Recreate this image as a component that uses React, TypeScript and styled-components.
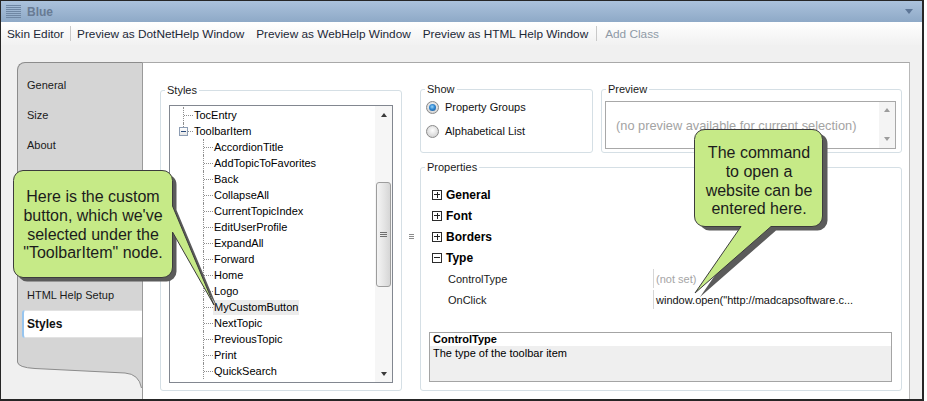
import React from "react";
import styled, { createGlobalStyle, css } from "styled-components";

const UI_FONT = `"Liberation Sans", Arial, sans-serif`;

const GlobalStyle = createGlobalStyle`
  html, body { margin: 0; padding: 0; background: #ffffff; }
  body { font-family: ${UI_FONT}; color: #111; }
  *, *::before, *::after { box-sizing: border-box; }
`;

const Frame = styled.div`
  position: relative;
  width: 924px;
  height: 401px;
  border-style: solid;
  border-color: #262626;
  border-width: 1px 2px 2px 1px;
  background: #f0f0f0;
  display: flex;
  flex-direction: column;
  overflow: hidden;
`;

/* ---------- title bar ---------- */
const TitleBar = styled.div`
  flex: none;
  height: 21px;
  display: flex;
  align-items: center;
  gap: 6px;
  padding: 0 9px 0 5px;
  background: linear-gradient(#abc2dc, #8ea9c7);
  color: #687b94;
  font-size: 12px;
  font-weight: bold;
`;
const TitleText = styled.span`
  flex: 1;
`;

/* ---------- toolbar ---------- */
const Toolbar = styled.div`
  flex: none;
  height: 23px;
  display: flex;
  align-items: center;
  background: linear-gradient(#ffffff, #f1f1f1);
  font-size: 11.8px;
`;
const ToolButton = styled.span<{ $disabled?: boolean }>`
  padding: 0 6px;
  white-space: nowrap;
  color: ${(p) => (p.$disabled ? "#8f9aa6" : "#1b2736")};
`;
const ToolSep = styled.span<{ $gap?: number }>`
  width: 1px;
  height: 15px;
  margin: 0 ${(p) => p.$gap ?? 0}px;
  background: #c9c9c9;
`;

/* ---------- body ---------- */
const Body = styled.div`
  flex: 1;
  min-height: 0;
  display: flex;
  padding: 17px 12px 0 16px;
`;
const MainPanel = styled.div`
  flex: 1;
  display: flex;
`;
const TabColumn = styled.div`
  width: 125px;
  flex: none;
  display: flex;
  flex-direction: column;
  margin-bottom: 11px;
`;
const TabList = styled.div`
  flex: 1;
  background: #d5d5d5;
  border-top: 1px solid #8c8c8c;
  border-left: 1px solid #8c8c8c;
  border-top-left-radius: 8px;
  padding-top: 7px;
  display: flex;
  flex-direction: column;
`;
const Tab = styled.div<{ $active?: boolean }>`
  height: 30px;
  margin-left: 4px;
  padding-left: 5px;
  display: flex;
  align-items: center;
  font-size: 11px;
  color: #1a1a1a;
  ${(p) =>
    p.$active &&
    css`
      height: 28px;
      background: #ffffff;
      border-left: 2px solid #97c5ef;
      padding-left: 3px;
      border-radius: 3px 0 0 3px;
      font-weight: bold;
      font-size: 12px;
      color: #111;
      box-shadow: inset 0 1px 0 #e2e2e2, inset 0 -1px 0 #e2e2e2;
    `}
`;
const TabFoot = styled.svg`
  display: block;
  flex: none;
`;

const ContentArea = styled.div`
  flex: 1;
  background: #ffffff;
  border-left: 1px solid #9a9a9a;
  border-top: 1px solid #a9a9a9;
  border-right: 1px solid #b9b9b9;
  padding: 19px 7px 8px 17px;
  display: grid;
  grid-template-columns: 242px 18px 482px;
`;

/* ---------- group boxes ---------- */
type Pad = [number, number, number, number];
const GroupBox = styled.fieldset<{ $pad: Pad }>`
  margin: 0;
  min-width: 0;
  border: 1px solid #d5dfe5;
  border-radius: 3px;
  padding: ${(p) => p.$pad.map((v) => v + "px").join(" ")};
  display: flex;
  flex-direction: column;
  & > legend {
    margin-left: ${(p) => 4 - p.$pad[3]}px;
  }
`;
const Legend = styled.legend`
  padding: 0 2px;
  font-size: 11px;
  line-height: 16px;
  color: #1a1a1a;
`;

/* ---------- styles tree ---------- */
const ListBox = styled.div`
  height: 278px;
  display: flex;
  border: 1px solid #828790;
  background: #ffffff;
`;
const TreeArea = styled.div`
  flex: 1;
  padding-top: 1px;
  overflow: hidden;
  font-size: 11px;
  color: #000;
`;
const TreeRow = styled.div<{ $level: number }>`
  height: 16px;
  display: flex;
  align-items: center;
  padding-left: ${(p) => 13 + 20 * p.$level}px;
`;
const Connector = styled.span<{ $last?: boolean }>`
  position: relative;
  flex: none;
  width: 10px;
  height: 16px;
  &::before {
    content: "";
    position: absolute;
    left: 0;
    top: 0;
    height: ${(p) => (p.$last ? "8px" : "16px")};
    border-left: 1px dotted #8f8f8f;
  }
  &::after {
    content: "";
    position: absolute;
    left: 1px;
    top: 8px;
    width: 9px;
    border-top: 1px dotted #8f8f8f;
  }
`;
const TreeToggle = styled.span`
  position: absolute;
  left: -4px;
  top: 4px;
  width: 9px;
  height: 9px;
  border: 1px solid #8d9db3;
  background: linear-gradient(#ffffff, #e4e4e4);
  z-index: 1;
  &::after {
    content: "";
    position: absolute;
    left: 1px;
    right: 1px;
    top: 3px;
    height: 1px;
    background: #2a4b7c;
  }
`;
const TreeLabel = styled.span<{ $selected?: boolean }>`
  padding: 0 1px;
  line-height: 15px;
  white-space: nowrap;
  background: ${(p) => (p.$selected ? "#ececec" : "transparent")};
`;

const VScroll = styled.div`
  width: 17px;
  flex: none;
  display: flex;
  flex-direction: column;
  background: #f6f6f6;
`;
const ScrollBtn = styled.div`
  height: 17px;
  flex: none;
  display: flex;
  align-items: center;
  justify-content: center;
`;
const Arrow = styled.span<{ $dir: "up" | "down"; $color?: string }>`
  width: 0;
  height: 0;
  border-left: 3.5px solid transparent;
  border-right: 3.5px solid transparent;
  ${(p) =>
    p.$dir === "up"
      ? css`border-bottom: 4px solid ${p.$color || "#3a3a3a"};`
      : css`border-top: 4px solid ${p.$color || "#3a3a3a"};`}
`;
const ScrollTrack = styled.div`
  flex: 1;
  padding-top: 59px;
`;
const Thumb = styled.div`
  height: 105px;
  margin: 0 1px;
  border: 1px solid #9d9d9d;
  border-radius: 3px;
  background: linear-gradient(90deg, #f4f4f4, #e6e6e6 50%, #d6d6d6);
  display: flex;
  align-items: center;
  justify-content: center;
`;
const ThumbGrip = styled.span`
  width: 7px;
  height: 6px;
  background: repeating-linear-gradient(#6f6f6f 0 1px, transparent 1px 2px);
`;

const Splitter = styled.div`
  display: flex;
  align-items: center;
  justify-content: center;
`;
const SplitGrip = styled.span`
  width: 5px;
  height: 5px;
  background: repeating-linear-gradient(#8c8c8c 0 1px, transparent 1px 2px);
`;

/* ---------- right column ---------- */
const RightColumn = styled.div`
  display: flex;
  flex-direction: column;
  gap: 6px;
`;
const TopRow = styled.div`
  display: flex;
  gap: 8px;
  height: 72px;
  flex: none;
  margin-top: -1px;
`;
const ShowBox = styled(GroupBox)`
  width: 173px;
  flex: none;
  gap: 4px;
`;
const PreviewBox = styled(GroupBox)`
  flex: 1;
`;
const RadioRow = styled.div`
  height: 20px;
  display: flex;
  align-items: center;
  gap: 6px;
  font-size: 11px;
  color: #111;
`;
const Radio = styled.span<{ $checked?: boolean }>`
  position: relative;
  width: 13px;
  height: 13px;
  flex: none;
  border-radius: 50%;
  border: 1px solid #8a8a8a;
  background: radial-gradient(circle at 50% 40%, #fdfdfd, #d0d0d0 85%);
  ${(p) =>
    p.$checked &&
    css`
      &::after {
        content: "";
        position: absolute;
        left: 2px;
        top: 2px;
        width: 7px;
        height: 7px;
        border-radius: 50%;
        background: radial-gradient(circle at 45% 40%, #9ad6fa 0, #2f86d0 45%, #1b4f8c 100%);
      }
    `}
`;
const PreviewField = styled.div`
  flex: 1;
  display: flex;
  border: 1px solid #a8a8a8;
  background: #ffffff;
`;
const PreviewText = styled.div`
  flex: 1;
  padding: 0 10px;
  display: flex;
  align-items: center;
  color: #a3a3a3;
  font-size: 12.8px;
  white-space: nowrap;
`;
const MiniScroll = styled.div`
  width: 16px;
  flex: none;
  display: flex;
  flex-direction: column;
  justify-content: space-between;
  align-items: center;
  background: #f4f4f4;
  padding: 6px 0 7px;
`;

const PropertiesBox = styled(GroupBox)`
  flex: 1;
`;
const PropGrid = styled.div`
  margin-left: 3px;
  display: flex;
  flex-direction: column;
`;
const CategoryRow = styled.div`
  height: 21px;
  display: flex;
  align-items: center;
  gap: 4px;
  font-size: 12px;
  font-weight: bold;
  color: #000;
`;
const ExpandBox = styled.span<{ $open?: boolean }>`
  position: relative;
  width: 10px;
  height: 10px;
  flex: none;
  border: 1px solid #2c2c2c;
  background: #fff;
  &::before {
    content: "";
    position: absolute;
    left: 1px;
    right: 1px;
    top: 3.5px;
    height: 1px;
    background: #222;
  }
  ${(p) =>
    !p.$open &&
    css`
      &::after {
        content: "";
        position: absolute;
        top: 1px;
        bottom: 1px;
        left: 3.5px;
        width: 1px;
        background: #222;
      }
    `}
`;
const PropertyRow = styled.div`
  height: 21px;
  display: grid;
  grid-template-columns: 221px 1fr;
  align-items: center;
  font-size: 11px;
`;
const PropName = styled.span`
  padding-left: 16px;
  color: #1a1a1a;
`;
const PropValue = styled.span<{ $muted?: boolean }>`
  height: 19px;
  display: flex;
  align-items: center;
  border-left: 1px solid #d6d6d6;
  padding-left: 2px;
  white-space: nowrap;
  overflow: hidden;
  color: ${(p) => (p.$muted ? "#a5a5a5" : "#111")};
`;
const DescBox = styled.div`
  margin-top: auto;
  height: 50px;
  flex: none;
  border: 1px solid #a4a4a4;
  background: #efefef;
  display: flex;
  flex-direction: column;
  font-size: 11px;
  color: #000;
`;
const DescTitle = styled.div`
  height: 13px;
  line-height: 13px;
  padding-left: 3px;
  background: #ffffff;
  font-weight: bold;
`;
const DescText = styled.div`
  padding: 1px 0 0 3px;
  line-height: 13px;
`;

/* ---------- callouts ---------- */
const Overlay = styled.svg`
  position: absolute;
  left: -1px;
  top: -1px;
  width: 927px;
  height: 401px;
  pointer-events: none;
  overflow: visible;
`;
const CalloutText = styled.div<{ $x: number; $y: number; $w: number; $h: number }>`
  position: absolute;
  left: ${(p) => p.$x - 1}px;
  top: ${(p) => p.$y - 1}px;
  width: ${(p) => p.$w}px;
  height: ${(p) => p.$h}px;
  display: flex;
  flex-direction: column;
  align-items: center;
  justify-content: center;
  text-align: center;
  font-family: ${UI_FONT};
  font-size: 16px;
  line-height: 18.6px;
  color: #1c1c1c;
  white-space: nowrap;
  pointer-events: none;
`;

const CALLOUT_1 =
  "M23,170.5 H162 A10,10 0 0 1 172.5,180.5 V206 L214,305 L172.5,232 V267 A10,10 0 0 1 162,277.5 H23 A10,10 0 0 1 13.5,267 V180.5 A10,10 0 0 1 23,170.5 Z";
const CALLOUT_2 =
  "M705,129.5 H812 A10,10 0 0 1 822.5,139.5 V216 A10,10 0 0 1 812,226.5 H771 L695,293 L741,226.5 H705 A10,10 0 0 1 694.5,216 V139.5 A10,10 0 0 1 705,129.5 Z";

const tabs = [
  "General",
  "Size",
  "About",
  "Caption",
  "Navigation Pane",
  "Toolbar",
  "WebHelp Setup",
  "HTML Help Setup",
];

const children = [
  "AccordionTitle",
  "AddTopicToFavorites",
  "Back",
  "CollapseAll",
  "CurrentTopicIndex",
  "EditUserProfile",
  "ExpandAll",
  "Forward",
  "Home",
  "Logo",
  "MyCustomButton",
  "NextTopic",
  "PreviousTopic",
  "Print",
  "QuickSearch",
];

export default function App() {
  return (
    <>
      <GlobalStyle />
      <Frame>
        <TitleBar>
          <svg width="15" height="13" viewBox="0 0 15 13">
            {[0.5, 2.5, 4.5, 6.5, 8.5, 10.5, 12.5].map((y) => (
              <line key={y} x1="0" x2="15" y1={y} y2={y} stroke="#6f87a4" strokeWidth="1" />
            ))}
          </svg>
          <TitleText>Blue</TitleText>
          <svg width="8" height="5" viewBox="0 0 8 5">
            <path d="M0,0 H8 L4,5 Z" fill="#5d7697" />
          </svg>
        </TitleBar>

        <Toolbar>
          <ToolButton>Skin Editor</ToolButton>
          <ToolSep />
          <ToolButton>Preview as DotNetHelp Window</ToolButton>
          <ToolButton>Preview as WebHelp Window</ToolButton>
          <ToolButton>Preview as HTML Help Window</ToolButton>
          <ToolSep $gap={2} />
          <ToolButton $disabled>Add Class</ToolButton>
        </Toolbar>

        <Body>
          <MainPanel>
            <TabColumn>
              <TabList>
                {tabs.map((t) => (
                  <Tab key={t}>{t}</Tab>
                ))}
                <Tab $active>Styles</Tab>
              </TabList>
              <TabFoot width="125" height="30" viewBox="0 0 125 30">
                <path d="M0,0 V4 Q1,9.5 18,10.5 L108,15 Q122,16 124.5,30 H125 V0 Z" fill="#d5d5d5" />
                <path d="M0.5,0 V4 Q1,9.5 18,10.5 L108,15 Q122,16 124.5,30" fill="none" stroke="#8c8c8c" />
              </TabFoot>
            </TabColumn>

            <ContentArea>
              <GroupBox $pad={[7, 8, 7, 8]}>
                <Legend>Styles</Legend>
                <ListBox>
                  <TreeArea>
                    <TreeRow $level={0}>
                      <Connector />
                      <TreeLabel>TocEntry</TreeLabel>
                    </TreeRow>
                    <TreeRow $level={0}>
                      <Connector $last>
                        <TreeToggle />
                      </Connector>
                      <TreeLabel>ToolbarItem</TreeLabel>
                    </TreeRow>
                    {children.map((c) => (
                      <TreeRow $level={1} key={c}>
                        <Connector />
                        <TreeLabel $selected={c === "MyCustomButton"}>{c}</TreeLabel>
                      </TreeRow>
                    ))}
                  </TreeArea>
                  <VScroll>
                    <ScrollBtn>
                      <Arrow $dir="up" />
                    </ScrollBtn>
                    <ScrollTrack>
                      <Thumb>
                        <ThumbGrip />
                      </Thumb>
                    </ScrollTrack>
                    <ScrollBtn>
                      <Arrow $dir="down" />
                    </ScrollBtn>
                  </VScroll>
                </ListBox>
              </GroupBox>

              <Splitter>
                <SplitGrip />
              </Splitter>

              <RightColumn>
                <TopRow>
                  <ShowBox $pad={[0, 6, 0, 5]}>
                    <Legend>Show</Legend>
                    <RadioRow>
                      <Radio $checked />
                      Property Groups
                    </RadioRow>
                    <RadioRow>
                      <Radio />
                      Alphabetical List
                    </RadioRow>
                  </ShowBox>
                  <PreviewBox $pad={[4, 5, 3, 3]}>
                    <Legend>Preview</Legend>
                    <PreviewField>
                      <PreviewText>(no preview available for current selection)</PreviewText>
                      <MiniScroll>
                        <Arrow $dir="up" $color="#9c9c9c" />
                        <Arrow $dir="down" $color="#9c9c9c" />
                      </MiniScroll>
                    </PreviewField>
                  </PreviewBox>
                </TopRow>

                <PropertiesBox $pad={[9, 9, 8, 8]}>
                  <Legend>Properties</Legend>
                  <PropGrid>
                    <CategoryRow>
                      <ExpandBox />
                      General
                    </CategoryRow>
                    <CategoryRow>
                      <ExpandBox />
                      Font
                    </CategoryRow>
                    <CategoryRow>
                      <ExpandBox />
                      Borders
                    </CategoryRow>
                    <CategoryRow>
                      <ExpandBox $open />
                      Type
                    </CategoryRow>
                    <PropertyRow>
                      <PropName>ControlType</PropName>
                      <PropValue $muted>(not set)</PropValue>
                    </PropertyRow>
                    <PropertyRow>
                      <PropName>OnClick</PropName>
                      <PropValue>window.open("http://madcapsoftware.c...</PropValue>
                    </PropertyRow>
                  </PropGrid>
                  <DescBox>
                    <DescTitle>ControlType</DescTitle>
                    <DescText>The type of the toolbar item</DescText>
                  </DescBox>
                </PropertiesBox>
              </RightColumn>
            </ContentArea>
          </MainPanel>
        </Body>

        <Overlay viewBox="0 0 927 401">
          <path d={CALLOUT_1} fill="#5b5b5b" transform="translate(4,4)" />
          <path d={CALLOUT_1} fill="#c6ea87" stroke="#3c3c3c" strokeWidth="1" />
          <path d={CALLOUT_2} fill="#5b5b5b" transform="translate(5,4)" />
          <path d={CALLOUT_2} fill="#c6ea87" stroke="#3c3c3c" strokeWidth="1" />
        </Overlay>
        <CalloutText $x={13} $y={172} $w={160} $h={107}>
          <span>Here is the custom</span>
          <span>button, which we've</span>
          <span>selected under the</span>
          <span>"ToolbarItem" node.</span>
        </CalloutText>
        <CalloutText $x={695} $y={133} $w={128} $h={97}>
          <span>The command</span>
          <span>to open a</span>
          <span>website can be</span>
          <span>entered here.</span>
        </CalloutText>
      </Frame>
    </>
  );
}
